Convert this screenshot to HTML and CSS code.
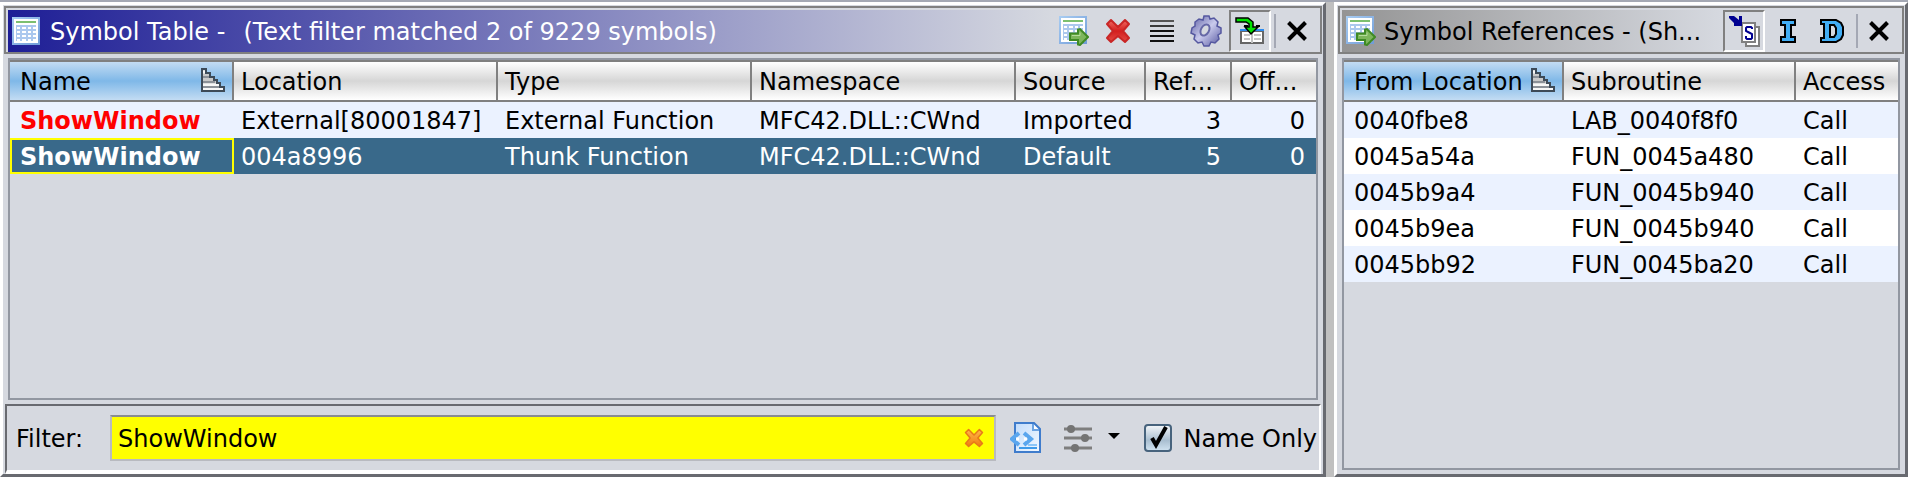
FILE: index.html
```html
<!DOCTYPE html>
<html lang="en">
<head>
<meta charset="utf-8">
<title>Symbol Table</title>
<link rel="stylesheet" href="styles.css">
</head>
<body>
<svg class="defs" aria-hidden="true">
  <defs>
    <linearGradient id="frame" x1="0" y1="0" x2="1" y2="1"><stop offset="0" stop-color="#a9cdf2"/><stop offset="1" stop-color="#6f9bd8"/></linearGradient>
    <linearGradient id="red" x1="0" y1="0" x2="0" y2="1"><stop offset="0" stop-color="#f06a62"/><stop offset=".5" stop-color="#d41f1f"/><stop offset="1" stop-color="#e24a44"/></linearGradient>
    <linearGradient id="orange" x1="0" y1="0" x2="0" y2="1"><stop offset="0" stop-color="#ffb84a"/><stop offset="1" stop-color="#f07c10"/></linearGradient>
    <linearGradient id="gear" x1="0" y1="0" x2="1" y2="1"><stop offset="0" stop-color="#5a5ca2"/><stop offset=".5" stop-color="#c9caec"/><stop offset="1" stop-color="#5557a0"/></linearGradient>
    <linearGradient id="page" x1="0" y1="0" x2="1" y2="1"><stop offset="0" stop-color="#c2dcfb"/><stop offset="1" stop-color="#f3f9ff"/></linearGradient>
    <symbol id="grid" viewBox="0 0 28 28">
      <rect width="28" height="28" fill="url(#frame)"/>
      <rect x="2" y="2" width="24" height="24" fill="#fff"/>
      <rect x="4" y="4" width="20" height="2" fill="#7cc070"/>
      <path d="M4 8h20v16H4z" fill="#abc8ee"/>
      <path d="M5 10h3v2H5zM10 10h4v2h-4zM16 10h3v2h-3zM21 10h3v2h-3zM5 14h3v2H5zM10 14h4v2h-4zM16 14h3v2h-3zM21 14h3v2h-3zM5 18h3v2H5zM10 18h4v2h-4zM16 18h3v2h-3zM21 18h3v2h-3zM5 22h3v2H5zM10 22h4v2h-4zM16 22h3v2h-3zM21 22h3v2h-3z" fill="#fff"/>
    </symbol>
    <symbol id="grid-go" viewBox="0 0 30 30">
      <use href="#grid" width="28" height="28"/>
      <path d="M11 17.500h8v-4l2-.5 8 8-8 8-2-.5v-4.500h-8z" fill="#7db65c" stroke="#3f8a24" stroke-width="2"/>
      <path d="M13 19.500h8v-3" fill="none" stroke="#b5dc9c" stroke-width="1"/>
    </symbol>
    <symbol id="sort" viewBox="0 0 24 24">
      <path d="M1 1h4v4h4v4h4v3h3v3h3v3h4v5H1z" fill="#c8c8c8"/>
      <path d="M2 4h3M2 21h20M2 17h16" stroke="#f6f6f6" stroke-width="3"/>
      <path d="M2 9h7M2 14h12M2 19h18" stroke="#8b9097" stroke-width="2"/>
      <path d="M1 23V1h4v4h4v4h4v3h3v3h3v4h4v4z" fill="none" stroke="#3d4a57" stroke-width="2"/>
    </symbol>
    <symbol id="close" viewBox="0 0 20 20">
      <path d="M1.500 1.500l17 17M18.500 1.500l-17 17" stroke="#000" stroke-width="4"/>
    </symbol>
    <symbol id="cross" viewBox="0 0 26 26">
      <path d="M6 2l7 7 7-7 4 4-6 7 6 7-4 4-7-6-7 6-4-4 6-7-6-7z" stroke-width="2" stroke-linejoin="round"/>
    </symbol>
  </defs>
</svg>
<main class="workspace">
  <section class="window symbols">
    <header class="titlebar active">
      <h1 class="title"><svg class="logo"><use href="#grid"/></svg><span class="caption">Symbol Table -</span> <span class="caption detail">(Text filter matched 2 of 9229 symbols)</span></h1>
      <div class="tools">
        <button class="tool" aria-label="Open references"><svg width="30" height="30"><use href="#grid-go"/></svg></button>
        <button class="tool" aria-label="Delete"><svg class="delete" width="26" height="26"><use href="#cross"/></svg></button>
        <button class="tool" aria-label="Make selection"><svg width="24" height="22" viewBox="0 0 24 22"><path d="M0 1h24" stroke="#555" stroke-width="2"/><path d="M0 6h24" stroke="#3a3a3a" stroke-width="2"/><path d="M0 11h24M0 16h24M0 21h24" stroke="#111" stroke-width="2"/></svg></button>
        <button class="tool" aria-label="Configure filter"><svg width="32" height="32" viewBox="0 0 32 32"><path d="M14 1l5 0 1 3 4-1 4 4-1 4 4 2v5l-3 2 1 4-4 4-4-1-2 4h-5l-2-4-4 1-4-4 1-4-4-2 1-5 3-2 0-4 4-3 4 1z" fill="url(#gear)" stroke="#5558a0" stroke-width="1.500"/><ellipse cx="15" cy="15" rx="4" ry="6" transform="rotate(30 15 15)" fill="#d6d9e0" stroke="#6668a6" stroke-width="2"/></svg></button>
        <button class="tool pressed" aria-label="Navigate on selection" aria-pressed="true"><svg width="30" height="30" viewBox="0 0 30 30"><path d="M6 15h22v12H6z" fill="#fff" stroke="#666" stroke-width="2"/><path d="M5 14h24" stroke="#2d8cf0" stroke-width="2"/><path d="M17 15v12M9 19h6M19 19h7M9 23h6M19 23h7" stroke="#c4c4c4" stroke-width="2"/><path d="M9 10h4M21 10h4" stroke="#000" stroke-width="2"/><path d="M1 2h12l5 4v5h5l-7 7-6-7h4V8l-3-2H1z" fill="#00e000" stroke="#000" stroke-width="1.500"/></svg></button>
        <span class="divider"></span>
        <button class="tool last" aria-label="Close"><svg width="20" height="20"><use href="#close"/></svg></button>
      </div>
    </header>
    <div class="scroll">
      <table>
        <colgroup><col class="c-name"><col class="c-loc"><col class="c-type"><col class="c-ns"><col class="c-src"><col class="c-ref"><col class="c-off"></colgroup>
        <thead><tr><th class="sorted"><span class="head">Name<svg class="sort"><use href="#sort"/></svg></span></th><th>Location</th><th>Type</th><th>Namespace</th><th>Source</th><th>Ref...</th><th>Off...</th></tr></thead>
        <tbody>
          <tr><td class="external">ShowWindow</td><td>External[80001847]</td><td>External Function</td><td>MFC42.DLL::CWnd</td><td>Imported</td><td class="num">3</td><td class="num">0</td></tr>
          <tr class="selected"><td class="focused">ShowWindow</td><td>004a8996</td><td>Thunk Function</td><td>MFC42.DLL::CWnd</td><td>Default</td><td class="num">5</td><td class="num">0</td></tr>
        </tbody>
      </table>
    </div>
    <form class="filter">
      <label class="text" for="filter">Filter:</label>
      <div class="field">
        <input id="filter" type="text" value="ShowWindow">
        <button type="button" class="clear" aria-label="Clear filter"><svg width="20" height="20"><use href="#cross"/></svg></button>
      </div>
      <button type="button" class="option" aria-label="Filter options"><svg width="32" height="32" viewBox="0 0 32 32"><path d="M5 1h19l6 6v23H5z" fill="url(#page)" stroke="#3f7ccc" stroke-width="2"/><path d="M23 2v6h6" fill="#fff" stroke="#6ba3e2" stroke-width="2"/><path d="M9 26h18" stroke="#3f9bea" stroke-width="2"/><path d="M18 23h9" stroke="#8cc6f8" stroke-width="2"/><path d="M9 11l-7 6 7 6M14 11l7 6-7 6" fill="none" stroke="#5aa6ee" stroke-width="4"/><path d="M6 17h3M14 17h3" stroke="#fff" stroke-width="3"/></svg></button>
      <button type="button" class="option columns" aria-label="Column filters"><svg width="28" height="28" viewBox="0 0 28 28"><path d="M0 5h28M0 14h28M0 24h28" stroke="#7e7e7e" stroke-width="3"/><g fill="#747474"><circle cx="7" cy="5" r="4"/><circle cx="21" cy="14" r="4"/><circle cx="11" cy="24" r="4"/></g></svg><svg class="arrow" width="12" height="10" viewBox="0 0 12 10"><path d="M0 0h12L6 6z"/></svg></button>
      <label class="check"><span class="box"><input type="checkbox" checked><svg class="tick" width="28" height="28" viewBox="0 0 28 28"><path d="M8 14l4 7L22 3" fill="none" stroke="#000" stroke-width="4"/></svg></span><span class="text">Name Only</span></label>
    </form>
  </section>
  <section class="window references">
    <header class="titlebar">
      <h1 class="title"><svg class="logo go"><use href="#grid-go"/></svg><span class="caption">Symbol References - (Sh...</span></h1>
      <div class="tools">
        <button class="tool pressed" aria-label="References to" aria-pressed="true"><svg width="34" height="34" viewBox="0 0 34 34"><path d="M20 13h12v19H19v-4" fill="#fff" stroke="#808080" stroke-width="2"/><path d="M15 9h13v19H15z" fill="#fff" stroke="#808080" stroke-width="2"/><path d="M25 15v-1l-1-1h-4l-1 1v3l2 1 2 1 2 1v4l-1 1h-4l-1-1v-2" fill="none" stroke="#000090" stroke-width="2"/><path d="M2 2h5l5 4V2h3v10H7V9L2 4z" fill="#000090"/></svg></button>
        <button class="tool" aria-label="Instruction references"><svg width="16" height="24" viewBox="0 0 16 24"><path d="M1 1h14v5h-4v12h4v5H1v-5h4V6H1z" fill="#42aef5" stroke="#000" stroke-width="2"/></svg></button>
        <button class="tool" aria-label="Data references"><svg width="24" height="24" viewBox="0 0 24 24"><path d="M1 1h15l5 3 2 4v8l-2 4-5 3H1v-4h3V5H1zM10 6v12h4l2-3V9l-2-3z" fill="#42aef5" stroke="#000" stroke-width="2" fill-rule="evenodd"/></svg></button>
        <span class="divider"></span>
        <button class="tool last" aria-label="Close"><svg width="20" height="20"><use href="#close"/></svg></button>
      </div>
    </header>
    <div class="scroll">
      <table>
        <colgroup><col class="c-from"><col class="c-sub"><col class="c-acc"></colgroup>
        <thead><tr><th class="sorted"><span class="head">From Location<svg class="sort"><use href="#sort"/></svg></span></th><th>Subroutine</th><th>Access</th></tr></thead>
        <tbody>
          <tr><td>0040fbe8</td><td>LAB_0040f8f0</td><td>Call</td></tr>
          <tr><td>0045a54a</td><td>FUN_0045a480</td><td>Call</td></tr>
          <tr><td>0045b9a4</td><td>FUN_0045b940</td><td>Call</td></tr>
          <tr><td>0045b9ea</td><td>FUN_0045b940</td><td>Call</td></tr>
          <tr><td>0045bb92</td><td>FUN_0045ba20</td><td>Call</td></tr>
        </tbody>
      </table>
    </div>
  </section>
</main>
</body>
</html>
```
FILE: styles.css
```css
* { box-sizing: border-box; }
body { margin: 0; font: 24px/32px "DejaVu Sans", sans-serif; color: #000; background: #c0c0c0; }
.defs { position: absolute; width: 0; height: 0; }
svg { display: block; flex: none; }
button { padding: 0; border: 0; background: none; font: inherit; color: inherit; }

.workspace { display: grid; grid-template-columns: 1326fr 574fr; gap: 8px; min-height: 100vh; border-top: 2px solid #a4a8b4; }
.window { display: flex; flex-direction: column; min-width: 0; background: #d6d9e0; border: 3px solid #fff; border-right-color: #686a70; border-bottom-color: #686a70; }

.titlebar { display: flex; height: 48px; padding: 2px 2px 0; border: 2px solid #808080; margin: 1px 1px 0; }
.title { display: flex; align-items: center; flex: 1; min-width: 0; gap: 10px; margin: 0; padding: 0 4px; font-size: 24px; font-weight: 400; background: linear-gradient(90deg, #949494, #d6d9e0); }
.active .title { color: #fff; background: linear-gradient(90deg, #1e1e96, #d6d9e0); }
.caption { white-space: nowrap; padding-top: 2px; }
.detail { margin-left: 8px; }
.logo { width: 28px; height: 28px; }
.logo.go { width: 30px; height: 30px; margin-right: -2px; }
.tools { display: flex; align-items: center; }
.tool { display: grid; place-items: center; width: 42px; height: 42px; margin-right: 2px; }
.tool.pressed { border: 2px solid #808080; border-right-color: #fff; border-bottom-color: #fff; }
.divider { width: 2px; height: 34px; background: #a4a8b4; margin-left: 1px; }
.tool.last { margin: 0; }
.delete { fill: url(#red); stroke: #c92626; }

.scroll { flex: 1; margin: 4px 5px; border: 2px solid #9297a1; }
table { width: 100%; table-layout: fixed; border-collapse: separate; border-spacing: 0; }
th, td { padding: 2px 7px 0; text-align: left; white-space: nowrap; overflow: hidden; }
th { height: 42px; font-weight: 400; border: 2px solid #808080; border-left: 0; background: linear-gradient(#fff, #d6d6d6 50%, #fff); }
th:last-child { border-right: 0; }
th:first-child, td:first-child { padding-left: 10px; }
th.sorted { background: linear-gradient(#c3dcf3, #7fb8e8 50%, #c3dcf3); }
.head { display: flex; align-items: center; justify-content: space-between; }
.sort { width: 24px; height: 24px; margin-bottom: 4px; }
td { height: 36px; }
tbody tr { background: #fff; }
tbody tr:nth-child(odd) { background: #ebf2ff; }
tbody tr.selected { color: #fff; background: #39698a; }
.num { text-align: right; padding-right: 11px; }
.external { color: #f00; font-weight: 700; }
.focused { font-weight: 700; outline: 2px solid #ff0; outline-offset: -2px; }
.c-name { width: 224px; } .c-loc { width: 264px; } .c-type { width: 254px; } .c-ns { width: 264px; }
.c-src { width: 130px; } .c-ref { width: 86px; } .c-off { width: 84px; }
.c-from { width: 220px; } .c-sub { width: 232px; } .c-acc { width: 102px; }

.filter { display: flex; align-items: center; height: 70px; margin: 0 2px; padding: 0 2px 0 9px; border: 2px solid #686a70; border-right-color: #fff; border-bottom: 4px solid #fff; white-space: nowrap; }
.text { padding-top: 2px; }
.field { display: flex; align-items: center; flex: 1; height: 46px; margin-left: 27px; padding-right: 10px; background: #ff0; border: 2px solid #b8bac0; border-top-color: #8a8c90; }
.field input { flex: 1; min-width: 0; padding: 2px 6px 0; border: 0; outline: 0; background: none; font: inherit; color: inherit; }
.clear svg { fill: url(#orange); stroke: #e87a18; }
.option { margin-left: 14px; }
.columns { display: flex; align-items: center; gap: 16px; margin-left: 22px; }
.check { display: flex; align-items: center; gap: 12px; margin-left: 24px; }
.box { display: grid; }
.box > * { grid-area: 1 / 1; }
.box input { appearance: none; width: 28px; height: 28px; margin: 0; border: 2px solid #47637d; border-radius: 4px; background: linear-gradient(#f0f4f8, #a9bed0 60%, #cde0ee); }
.tick { z-index: 1; visibility: hidden; pointer-events: none; }
.box input:checked + .tick { visibility: visible; }
```
